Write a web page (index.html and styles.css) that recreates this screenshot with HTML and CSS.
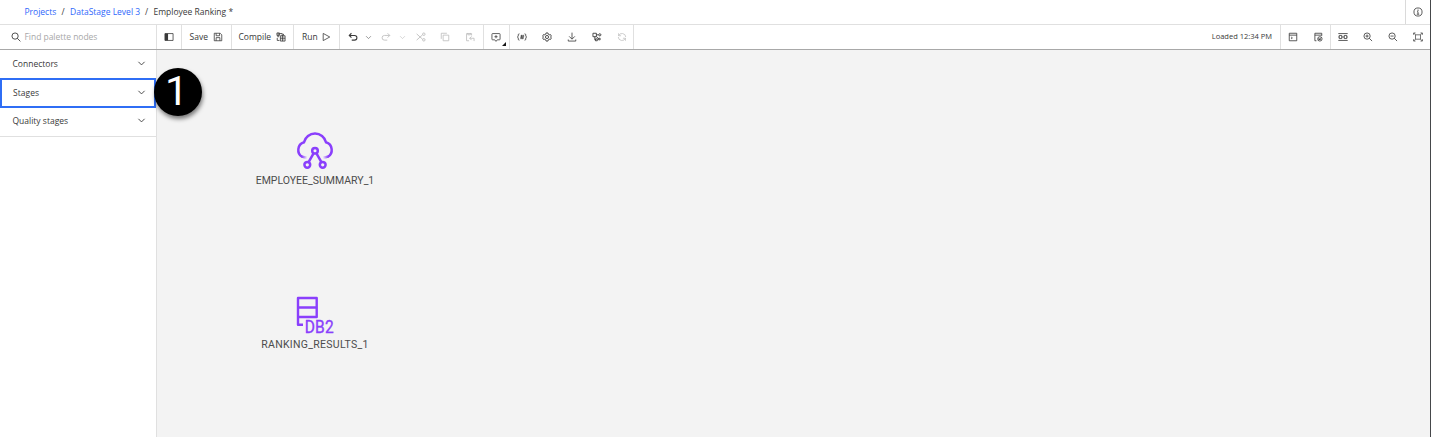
FILE: index.html
```html
<!DOCTYPE html>
<html lang="en">
<head>
<meta charset="utf-8">
<title>Employee Ranking</title>
<link rel="stylesheet" href="styles.css">
</head>
<body>
<svg class="defs" width="0" height="0">
  <symbol id="chev" viewBox="0 0 16 16"><path d="M2.5 5 8 10.5 13.5 5" fill="none" stroke="currentColor" stroke-width="1.6"/></symbol>
</svg>
<div class="app">
  <header class="header">
    <nav class="crumbs"><a class="c1">Projects</a><i>/</i><a class="c2">DataStage Level 3</a><i>/</i><span class="c3">Employee Ranking *</span></nav>
    <button class="info"><svg class="ic" viewBox="0 0 32 32"><g fill="none" stroke="currentColor" stroke-width="2.6"><circle cx="16" cy="16" r="13"/><path d="M12 23h8M13 15h3v8"/></g><circle cx="16" cy="10" r="2" fill="currentColor"/></svg></button>
  </header>
  <div class="toolbar">
    <div class="search"><svg class="ic" viewBox="0 0 32 32"><g fill="none" stroke="currentColor" stroke-width="2.800"><circle cx="13" cy="13" r="10"/><path d="m20 20 10 10"/></g></svg><span>Find palette nodes</span></div>
    <div class="group g-panel"><button><svg class="ic" viewBox="0 0 32 32"><path d="M3 5h26v22H3z" fill="none" stroke="currentColor" stroke-width="2.500"/><path d="M3 5h10v22H3z" fill="currentColor"/></svg></button></div>
    <div class="group g-save"><span class="t-save">Save</span><svg class="ic" viewBox="0 0 32 32"><path d="M4 4h19l5 5v19H4zM10 4v8h11V4M10 28V18h12v10" fill="none" stroke="currentColor" stroke-width="2.500"/></svg></div>
    <div class="group g-compile"><span class="t-compile">Compile</span><svg class="ic" viewBox="0 0 32 32"><g fill="none" stroke="currentColor" stroke-width="2.600"><path d="M3 3h8v8H3zM7 3v8M11 5h9v8M4 15h6M14 12h15v17H14zM14 20h15M21 12v17"/><path d="M4 19v8h7M24 6v5M17 25h1M24 25h2M17 16h1M24 16h2"/></g></svg></div>
    <div class="group g-run"><span class="t-run">Run</span><svg class="ic" viewBox="0 0 32 32"><path d="M7 4.500v23L28 16z" fill="none" stroke="currentColor" stroke-width="2.500" stroke-linejoin="round"/></svg></div>
    <div class="group g-edit">
      <button class="wide"><svg class="ic" viewBox="0 0 32 32"><path d="M11 4 4 11l7 7M4 11h17a7 7 0 0 1 0 15h-9" fill="none" stroke="currentColor" stroke-width="3.400"/></svg></button>
      <button class="thin"><svg class="ch"><use href="#chev"/></svg></button>
      <button class="mid off"><svg class="ic" viewBox="0 0 32 32"><path d="m21 4 7 7-7 7M28 11H11a7 7 0 0 0 0 15h9" fill="none" stroke="currentColor" stroke-width="2.700"/></svg></button>
      <button class="thin off"><svg class="ch"><use href="#chev"/></svg></button>
      <button class="first off"><svg class="ic" viewBox="0 0 32 32"><g fill="none" stroke="currentColor" stroke-width="2.800"><circle cx="25" cy="7" r="4"/><circle cx="25" cy="25" r="4"/><path d="M2 6 21 23M2 26 21 9"/></g></svg></button>
      <button class="off"><svg class="ic" viewBox="0 0 32 32"><path d="M10 10h18v18H10zM4 22V4h18" fill="none" stroke="currentColor" stroke-width="2.600"/></svg></button>
      <button class="off"><svg class="ic" viewBox="0 0 32 32"><path d="M21 11V5H5v23h8M9 3v6h8V3M21 14l-6 6 6 6M15 20h14v9" fill="none" stroke="currentColor" stroke-width="2.600"/></svg></button>
    </div>
    <div class="group g-comment"><button><svg class="ic" viewBox="0 0 32 32"><path d="M12 25H5a2 2 0 0 1-2-2V7a2 2 0 0 1 2-2h22a2 2 0 0 1 2 2v16a2 2 0 0 1-2 2h-7l-4 5-4-5M16 10v10M11 15h10" fill="none" stroke="currentColor" stroke-width="2.500"/></svg><i class="corner"></i></button></div>
    <div class="group g-tools">
      <button><svg class="ic" viewBox="0 0 32 32"><path d="M8 6H7a3 3 0 0 0-3 3v4l-3 3 3 3v4a3 3 0 0 0 3 3h1M24 6h1a3 3 0 0 1 3 3v4l3 3-3 3v4a3 3 0 0 1-3 3h-1M15 9l-2 14M20 9l-2 14M11 13h12M10 19h12" fill="none" stroke="currentColor" stroke-width="2.600"/></svg></button>
      <button><svg class="ic" viewBox="0 0 32 32"><g fill="none" stroke="currentColor" stroke-width="2.800"><path d="M13 3h6l1 4 3 2 4-1 3 5-3 3 3 3-3 5-4-1-3 2-1 4h-6l-1-4-3-2-4 1-3-5 3-3-3-3 3-5 4 1 3-2z"/><circle cx="16" cy="16" r="5"/></g></svg></button>
      <button><svg class="ic" viewBox="0 0 32 32"><path d="M16 2v20M7 14l9 9 9-9M4 24v5h24v-5" fill="none" stroke="currentColor" stroke-width="2.600"/></svg></button>
      <button><svg class="ic" viewBox="0 0 32 32"><g fill="none" stroke="currentColor" stroke-width="2.800"><path d="M3 4h11v11H3zM14 9h7M9 15v10h3M15 15l6 7"/><circle cx="25" cy="9" r="3.500"/><path d="M11 22h6v6h-6zM21 20h5v5h-5z"/></g></svg></button>
      <button class="off"><svg class="ic" viewBox="0 0 32 32"><path d="M5 4v8h8M5 12a12 12 0 0 1 23 4M27 28v-8h-8M27 20A12 12 0 0 1 4 16" fill="none" stroke="currentColor" stroke-width="2.400"/></svg></button>
    </div>
    <div class="status"><span>Loaded 12:34 PM</span></div>
    <div class="group g-view">
      <button><svg class="ic" viewBox="0 0 32 32"><path d="M4 4h24v24H4zM4 10h24M10 22l4-3-4-3" fill="none" stroke="currentColor" stroke-width="2.600"/></svg></button>
      <button><svg class="ic" viewBox="0 0 32 32"><g fill="none" stroke="currentColor" stroke-width="2.600"><path d="M11 28H6V4h22v8M6 10h22"/><circle cx="22" cy="22" r="7"/><path d="m17 27 10-10M19 19v5h6"/></g></svg></button>
    </div>
    <div class="group g-zoom">
      <button><svg class="ic" viewBox="0 0 32 32"><path d="M1 5h30M1 27h30M4 11h8v10H4zM20 11h8v10h-8zM12 16h8M1 16h3M28 16h3" fill="none" stroke="currentColor" stroke-width="2.600"/></svg></button>
      <button><svg class="ic" viewBox="0 0 32 32"><g fill="none" stroke="currentColor" stroke-width="2.600"><circle cx="13" cy="13" r="10"/><path d="m20 20 9 9M13 8v10M8 13h10"/></g></svg></button>
      <button><svg class="ic" viewBox="0 0 32 32"><g fill="none" stroke="currentColor" stroke-width="2.600"><circle cx="13" cy="13" r="10"/><path d="m20 20 9 9M8 13h10"/></g></svg></button>
      <button><svg class="ic" viewBox="0 0 32 32"><path d="M8 9h16v14H8zM2 9V3h6M24 3h6v6M30 23v6h-6M8 29H2v-6M2 3l6 6M30 3l-6 6M2 29l6-6M30 29l-6-6" fill="none" stroke="currentColor" stroke-width="2.200"/></svg></button>
    </div>
  </div>
  <div class="main">
    <aside class="palette">
      <div class="cat"><span class="p1">Connectors</span><svg class="cc"><use href="#chev"/></svg></div>
      <div class="cat sel"><span class="p2">Stages</span><svg class="cc"><use href="#chev"/></svg></div>
      <div class="cat last"><span class="p3">Quality stages</span><svg class="cc"><use href="#chev"/></svg></div>
    </aside>
    <section class="canvas">
      <div class="node n1">
        <svg viewBox="0 0 40 40"><defs><linearGradient id="fade" gradientUnits="userSpaceOnUse" x1="7" x2="33" y1="0" y2="0"><stop offset="0" stop-color="#8a3ffc"/><stop offset="0.200" stop-color="#8a3ffc" stop-opacity="0"/><stop offset="0.800" stop-color="#8a3ffc" stop-opacity="0"/><stop offset="1" stop-color="#8a3ffc"/></linearGradient></defs>
        <g fill="none" stroke-width="2.500"><path d="M7.300 25.900A8 8 0 0 1 9 11.300a11.300 11.300 0 0 1 22 0A8 8 0 0 1 32.700 25.900" stroke="#8a3ffc"/><path d="M7.100 25.700Q9 26.600 12.500 26.600M32.900 25.700Q31 26.600 27.500 26.600" stroke="url(#fade)"/><g stroke="#8a3ffc"><circle cx="20" cy="19.700" r="2.800"/><circle cx="12.300" cy="33.800" r="2.900"/><circle cx="27.700" cy="33.800" r="2.900"/><path d="m18.700 22.200-5.100 9M21.300 22.200l5.100 9"/></g></g></svg>
        <span>EMPLOYEE_SUMMARY_1</span>
      </div>
      <div class="node n2">
        <svg viewBox="0 0 40 40"><path d="M3 3h18.700v19H3zM3 12.500h18.700M3 22v7.800h5" fill="none" stroke="#8a3ffc" stroke-width="2.400" stroke-linejoin="round"/><text x="9.700" y="37.800" textLength="29.300" lengthAdjust="spacingAndGlyphs">DB2</text></svg>
        <span>RANKING_RESULTS_1</span>
      </div>
      <div class="badge">1</div>
    </section>
  </div>
</div>
</body>
</html>
```
FILE: styles.css
```css
* { box-sizing: border-box; }
body { margin: 0; font-family: "Open Sans", "Noto Sans", sans-serif; font-size: 8.5px; color: #393939; background: #fff; overflow: hidden; }
button { border: 0; padding: 0; margin: 0; background: none; color: inherit; position: relative; width: 24.8px; height: 100%; display: flex; align-items: center; justify-content: center; flex: none; }
i { font-style: normal; }
.defs { position: absolute; }
.app { width: 1431px; height: 437px; display: grid; grid-template-rows: 24px 26px 1fr; border-right: 1px solid #45474a; }
.ic { width: 10px; height: 10px; flex: none; display: block; }
.ch { width: 7px; height: 7px; }
.cc { width: 9px; height: 9px; }
.header { display: flex; justify-content: space-between; }
.crumbs { display: flex; align-items: center; padding: 0 0 2px 24.5px; white-space: nowrap; }
.crumbs a { color: #2f67fb; }
.crumbs i { width: 14px; text-align: center; }
.c1 { width: 31.5px; }
.c2 { width: 69.5px; }
.info { width: 25px; border-left: 1px solid #dadada; }
.toolbar { display: flex; border-top: 1px solid #e0e0e0; border-bottom: 1px solid #a8a8a8; white-space: nowrap; }
.search { width: 156px; display: flex; align-items: center; gap: 4px; padding-left: 10.5px; }
.search span { color: #a8a8a8; letter-spacing: -0.03px; }
.toolbar span { margin-bottom: 1.5px; }
.group { display: flex; align-items: center; border-left: 1px solid #e0e0e0; flex: none; }
.g-panel { width: 25px; }
.g-save { width: 50px; padding: 0 8px 0 7.5px; justify-content: space-between; }
.g-compile { width: 62px; padding: 0 7px 0 6.5px; justify-content: space-between; }
.g-run { width: 46px; padding: 0 8px; justify-content: space-between; }
.g-edit { width: 144px; }
.wide { width: 25px; }
.thin { width: 7px; }
.mid { width: 27px; }
.first { width: 24px; margin-left: 3px; }
.off { color: #bdbdbd; }
.g-edit .thin { color: #6f6f6f; }
.g-edit .thin.off { color: #c6c6c6; }
.g-comment { width: 26px; }
.corner { position: absolute; right: 3px; bottom: 3px; border-left: 4px solid transparent; border-bottom: 4px solid #161616; }
.g-tools { width: 125px; border-right: 1px solid #e0e0e0; }
.status { flex: 1; display: flex; align-items: center; justify-content: flex-end; padding-right: 8px; font-size: 7.5px; }
.g-view { width: 50px; }
.g-zoom { width: 100px; }
.main { display: grid; grid-template-columns: 157px 1fr; min-height: 0; }
.palette { border-right: 1px solid #e0e0e0; background: #fff; }
.cat { height: 28px; display: flex; align-items: center; justify-content: space-between; padding: 0 10px 1px 12.5px; }
.sel { height: 30px; border: 2px solid #2f6ef5; padding: 0 8px 1px 11px; }
.p2 { letter-spacing: .05px; }
.last { border-bottom: 1px solid #e0e0e0; height: 29px; padding-bottom: 3px; }
.canvas { position: relative; background: #f3f3f3; overflow: visible; }
.node { position: absolute; width: 160px; display: flex; flex-direction: column; align-items: center; font-family: Roboto, "Open Sans", sans-serif; font-size: 10.5px; line-height: 14px; color: #4c4c4c; }
.node svg { width: 40px; height: 40px; overflow: visible; }
.node text { font: 400 18.8px Roboto, sans-serif; fill: #8a3ffc; stroke: #8a3ffc; stroke-width: .4px; }
.n1 { left: 78px; top: 81px; }
.n2 { left: 78px; top: 245px; letter-spacing: .3px; }
.node span { margin-top: 3px; }
.badge { position: absolute; left: -3px; top: 18px; width: 48px; height: 48px; padding-right: 3px; border-radius: 50%; background: #000; color: #fff; font: 41px/47px Roboto, sans-serif; text-align: center; box-shadow: 1px 3px 4px rgba(0,0,0,.5); }
```
